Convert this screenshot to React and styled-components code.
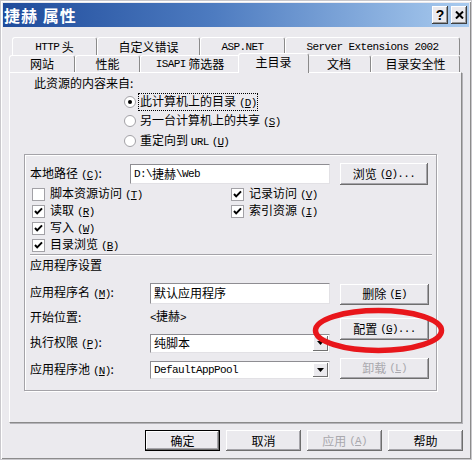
import React from "react";
import styled, { createGlobalStyle, css } from "styled-components";

const FACE = "#ebeaee";

const GlobalStyle = createGlobalStyle`
  html, body {
    margin: 0;
    padding: 0;
    background: ${FACE};
  }
  body {
    font-family: "Noto Sans CJK SC", "Liberation Sans", sans-serif;
    font-size: 12px;
    line-height: 14px;
    color: #000;
  }
  * {
    box-sizing: border-box;
  }
`;

const Window = styled.div`
  position: relative;
  width: 472px;
  height: 460px;
  padding: 2px;
  background: ${FACE};
  border: 1px solid #c9c8cc;
  box-shadow: inset 1px 1px 0 #fff, inset -1px -1px 0 #8c8c8c;
`;

const TitleBar = styled.div`
  display: flex;
  align-items: center;
  height: 24px;
  padding: 0 2px 0 1px;
  background: linear-gradient(90deg, #1f4b9b 0%, #4d7bc0 45%, #a9cbef 100%);
`;

const TitleText = styled.div`
  flex: 1;
  color: #fff;
  font-weight: bold;
  font-size: 16px;
  letter-spacing: 1px;
  line-height: 24px;
`;

const CaptionButton = styled.div`
  width: 16px;
  height: 18px;
  margin-left: 3px;
  display: flex;
  align-items: center;
  justify-content: center;
  background: ${FACE};
  box-shadow: inset -1px -1px 0 #404040, inset 1px 1px 0 #fff,
    inset -2px -2px 0 #9a9a9a;
  font: bold 14px "Liberation Sans", sans-serif;
`;

const Body = styled.div`
  padding: 10px 6px 0 6px;
`;

const TabRow = styled.div`
  position: relative;
  z-index: ${(p) => (p.$front ? 2 : 1)};
  display: flex;
  height: ${(p) => p.$h}px;
  margin-left: ${(p) => p.$indent || 0}px;
`;

const Tab = styled.div`
  flex: none;
  width: ${(p) => p.$w}px;
  height: 100%;
  display: flex;
  align-items: center;
  justify-content: center;
  background: ${FACE};
  border-top: 1px solid #fff;
  border-left: 1px solid #fff;
  border-right: 1px solid #8a8a8a;
  border-radius: 3px 3px 0 0;
  white-space: nowrap;

  ${(p) =>
    p.$active &&
    css`
      position: relative;
      z-index: 3;
      align-self: flex-start;
      width: ${p.$w + 4}px;
      height: 20px;
      margin: -2px -2px 0 -2px;
      padding-bottom: 3px;
    `}
`;

const Lat = styled.span`
  font-family: "Liberation Mono", monospace;
  font-size: 11px;
  letter-spacing: -0.6px;
`;

const AccWrap = styled.span`
  margin-left: 3px;
  font-family: "Liberation Mono", monospace;
  font-size: 11px;
  letter-spacing: -0.8px;

  u {
    text-underline-offset: 1px;
  }
`;

const Acc = ({ k }) => (
  <AccWrap>
    (<u>{k}</u>)
  </AccWrap>
);

const Panel = styled.div`
  width: 453px;
  height: 351px;
  padding: 3px 0 0 14px;
  background: ${FACE};
  border: 1px solid;
  border-color: #fff #8a8a8a #8a8a8a #fff;
  box-shadow: 1px 1px 0 #b4b3b8;
`;

const Heading = styled.div`
  padding-left: 10px;
  height: 14px;
`;

const RadioList = styled.div`
  margin: 2px 0 0 100px;
`;

const RadioRow = styled.div`
  display: flex;
  align-items: center;
  height: 19.5px;
`;

const Label = styled.span`
  margin-left: ${(p) => p.$gap ?? 4}px;
  padding: 0 1px;
  line-height: 13px;
  white-space: nowrap;
  outline: ${(p) => (p.$focus ? "1px dotted #000" : "none")};
`;

const Radio = ({ on }) => (
  <svg width="12" height="12" viewBox="0 0 12 12">
    <circle cx="6" cy="6" r="5.5" fill="#fff" stroke="#a2a1a6" />
    {on && <circle cx="6" cy="6" r="2" fill="#000" />}
  </svg>
);

const GroupBox = styled.div`
  width: 413px;
  height: 237px;
  margin-top: 3px;
  padding: 8px 0 0 5px;
  border: 1px solid #a4a3a8;
  box-shadow: inset 1px 1px 0 #fff, 1px 1px 0 #fff;
`;

const PathRow = styled.div`
  display: flex;
  align-items: center;
  height: 22px;
`;

const FieldLabel = styled.div`
  width: ${(p) => p.$w}px;
  flex: none;
  white-space: nowrap;
`;

const TextField = styled.div`
  position: relative;
  width: ${(p) => p.$w}px;
  height: ${(p) => p.$h}px;
  display: flex;
  align-items: center;
  padding-left: 3px;
  background: #fff;
  border: 1px solid;
  border-color: #8e8d92 #e2e1e5 #e2e1e5 #8e8d92;
  white-space: nowrap;
`;

const DropArrow = styled.div`
  position: absolute;
  top: 1px;
  right: 1px;
  bottom: 1px;
  width: 15px;
  display: flex;
  align-items: center;
  justify-content: center;
  background: ${FACE};
  box-shadow: inset -1px -1px 0 #707070, inset 1px 1px 0 #fff;
`;

const PushButton = styled.div`
  flex: none;
  width: ${(p) => p.$w}px;
  height: ${(p) => p.$h}px;
  margin-top: ${(p) => p.$mt || 0}px;
  margin-left: ${(p) => p.$ml || 0}px;
  display: flex;
  align-items: center;
  justify-content: center;
  background: ${FACE};
  color: ${(p) => (p.$disabled ? "#a9a8ad" : "#000")};
  box-shadow: inset -1px -1px 0 #6e6e6e, inset 1px 1px 0 #fff,
    inset -2px -2px 0 #a6a5aa;
  white-space: nowrap;
  ${(p) =>
    p.$default &&
    css`
      border: 1px solid #000;
    `}
`;

const CheckGrid = styled.div`
  display: grid;
  grid-template-columns: 199px 160px;
  grid-auto-rows: 17px;
  margin: 1px 0 0 2px;
`;

const CheckItem = styled.div`
  display: flex;
  align-items: center;
`;

const Check = ({ on }) => (
  <svg width="13" height="13" viewBox="0 0 13 13">
    <rect x="0.5" y="0.5" width="12" height="12" fill="#fff" stroke="#a2a1a6" />
    {on && (
      <path d="M3 6 L5.2 8.4 L10 3.4" fill="none" stroke="#000" strokeWidth="2" />
    )}
  </svg>
);

const Separator = styled.div`
  width: 402px;
  border-top: 1px solid #a4a3a8;
  border-bottom: 1px solid #fff;
`;

const SectionTitle = styled.div`
  margin-top: 2px;
  height: 14px;
`;

const AppArea = styled.div`
  display: flex;
  align-items: flex-start;
  margin-top: 10px;
`;

const FieldGrid = styled.div`
  display: grid;
  grid-template-columns: 120px 180px;
  grid-template-rows: 21px 26px 27px 26px;
  align-items: center;
  margin-top: 1px;
`;

const ButtonStack = styled.div`
  display: flex;
  flex-direction: column;
  margin-left: 10px;
  margin-top: 2px;
`;

const Footer = styled.div`
  display: flex;
  justify-content: flex-end;
  gap: 6px;
  margin-top: 7px;
`;

const Ellipse = styled.svg`
  position: absolute;
  left: 309px;
  top: 304px;
  pointer-events: none;
`;

const Arrow = () => (
  <svg width="7" height="4" viewBox="0 0 7 4">
    <path d="M0 0 H7 L3.5 4 Z" fill="#000" />
  </svg>
);

const Select = ({ h, children }) => (
  <TextField $w={180} $h={h}>
    {children}
    <DropArrow>
      <Arrow />
    </DropArrow>
  </TextField>
);

export default function App() {
  return (
    <>
      <GlobalStyle />
      <Window>
        <TitleBar>
          <TitleText>捷赫 属性</TitleText>
          <CaptionButton>?</CaptionButton>
          <CaptionButton>
            <svg width="9" height="8" viewBox="0 0 9 8">
              <path d="M1 0.5 L8 7.5 M8 0.5 L1 7.5" stroke="#000" strokeWidth="2" />
            </svg>
          </CaptionButton>
        </TitleBar>

        <Body>
          <TabRow $h={18} $indent={3}>
            <Tab $w={85}>
              <Lat>HTTP</Lat>&nbsp;头
            </Tab>
            <Tab $w={103}>自定义错误</Tab>
            <Tab $w={85}>
              <Lat>ASP.NET</Lat>
            </Tab>
            <Tab $w={175}>
              <Lat>Server Extensions 2002</Lat>
            </Tab>
          </TabRow>
          <TabRow $h={17} $front>
            <Tab $w={66}>网站</Tab>
            <Tab $w={65}>性能</Tab>
            <Tab $w={100}>
              <Lat>ISAPI</Lat>&nbsp;筛选器
            </Tab>
            <Tab $w={67} $active>
              主目录
            </Tab>
            <Tab $w={64}>文档</Tab>
            <Tab $w={89}>目录安全性</Tab>
          </TabRow>

          <Panel>
            <Heading>此资源的内容来自:</Heading>
            <RadioList>
              <RadioRow>
                <Radio on />
                <Label $gap={3} $focus>
                  此计算机上的目录<Acc k="D" />
                </Label>
              </RadioRow>
              <RadioRow>
                <Radio />
                <Label $gap={3}>
                  另一台计算机上的共享<Acc k="S" />
                </Label>
              </RadioRow>
              <RadioRow>
                <Radio />
                <Label $gap={3}>
                  重定向到 <Lat>URL</Lat>
                  <Acc k="U" />
                </Label>
              </RadioRow>
            </RadioList>

            <GroupBox>
              <PathRow>
                <FieldLabel $w={100}>
                  本地路径<Acc k="C" />:
                </FieldLabel>
                <TextField $w={200} $h={20}>
                  <Lat>D:\</Lat>捷赫<Lat>\Web</Lat>
                </TextField>
                <PushButton $w={88} $h={22} $ml={10}>
                  浏览<Acc k="O" />
                  <Lat>...</Lat>
                </PushButton>
              </PathRow>

              <CheckGrid>
                <CheckItem>
                  <Check />
                  <Label>
                    脚本资源访问<Acc k="T" />
                  </Label>
                </CheckItem>
                <CheckItem>
                  <Check on />
                  <Label>
                    记录访问<Acc k="V" />
                  </Label>
                </CheckItem>
                <CheckItem>
                  <Check on />
                  <Label>
                    读取<Acc k="R" />
                  </Label>
                </CheckItem>
                <CheckItem>
                  <Check on />
                  <Label>
                    索引资源<Acc k="I" />
                  </Label>
                </CheckItem>
                <CheckItem>
                  <Check on />
                  <Label>
                    写入<Acc k="W" />
                  </Label>
                </CheckItem>
                <div />
                <CheckItem>
                  <Check on />
                  <Label>
                    目录浏览<Acc k="B" />
                  </Label>
                </CheckItem>
              </CheckGrid>

              <Separator />
              <SectionTitle>应用程序设置</SectionTitle>

              <AppArea>
                <FieldGrid>
                  <FieldLabel $w={120}>
                    应用程序名<Acc k="M" />:
                  </FieldLabel>
                  <TextField $w={180} $h={21}>
                    默认应用程序
                  </TextField>

                  <FieldLabel $w={120}>开始位置:</FieldLabel>
                  <div>
                    <Lat>&lt;</Lat>捷赫<Lat>&gt;</Lat>
                  </div>

                  <FieldLabel $w={120}>
                    执行权限<Acc k="P" />:
                  </FieldLabel>
                  <Select h={19}>纯脚本</Select>

                  <FieldLabel $w={120}>
                    应用程序池<Acc k="N" />:
                  </FieldLabel>
                  <Select h={18}>
                    <Lat>DefaultAppPool</Lat>
                  </Select>
                </FieldGrid>

                <ButtonStack>
                  <PushButton $w={89} $h={21}>
                    删除<Acc k="E" />
                  </PushButton>
                  <PushButton $w={89} $h={22} $mt={13}>
                    配置<Acc k="G" />
                    <Lat>...</Lat>
                  </PushButton>
                  <PushButton $w={89} $h={21} $mt={18} $disabled>
                    卸载<Acc k="L" />
                  </PushButton>
                </ButtonStack>
              </AppArea>
            </GroupBox>
          </Panel>

          <Footer>
            <PushButton $w={75} $h={21} $default>
              确定
            </PushButton>
            <PushButton $w={75} $h={21}>
              取消
            </PushButton>
            <PushButton $w={75} $h={21} $disabled>
              应用<Acc k="A" />
            </PushButton>
            <PushButton $w={75} $h={21}>
              帮助
            </PushButton>
          </Footer>
        </Body>

        <Ellipse width="140" height="54" viewBox="0 0 140 54">
          <ellipse
            cx="68.5"
            cy="25.5"
            rx="63"
            ry="20"
            fill="none"
            stroke="#e8161b"
            strokeWidth="5.5"
          />
        </Ellipse>
      </Window>
    </>
  );
}
